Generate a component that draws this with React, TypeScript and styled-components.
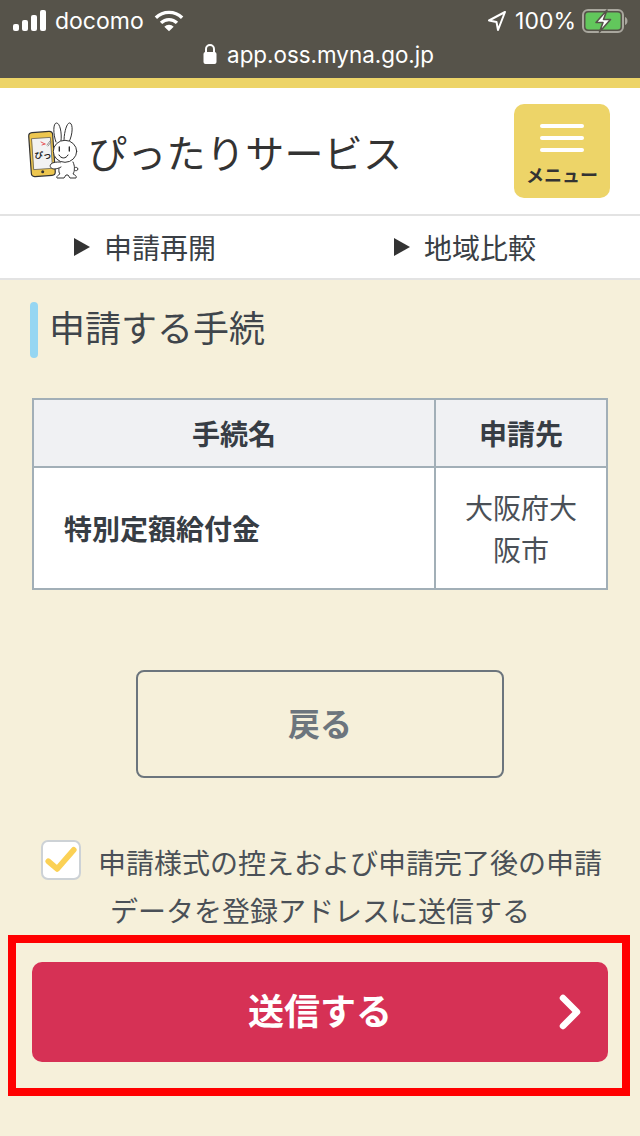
import React from 'react';
import styled, { createGlobalStyle } from 'styled-components';

const GlobalStyle = createGlobalStyle`
  html, body {
    margin: 0;
    padding: 0;
  }
  body {
    background: #f6f0da;
    font-family: "Noto Sans CJK JP", "Noto Sans", sans-serif;
  }
`;

const Page = styled.div`
  position: relative;
  width: 640px;
  height: 1136px;
  overflow: hidden;
  display: flex;
  flex-direction: column;
  background: #f6f0da;
`;

const StatusArea = styled.div`
  height: 78px;
  box-sizing: border-box;
  background: #56534a;
  color: #fff;
  display: flex;
  flex-direction: column;
`;

const StatusRow = styled.div`
  height: 42px;
  display: flex;
  align-items: center;
  justify-content: space-between;
  padding: 0 12px 0 11px;
  font-family: Inter, "Liberation Sans", sans-serif;
  font-size: 23px;
`;

const StatusGroup = styled.div`
  display: flex;
  align-items: center;
  gap: 8px;
`;

const UrlRow = styled.div`
  display: flex;
  align-items: center;
  justify-content: center;
  gap: 10px;
  height: 24px;
  padding-right: 3px;
  font-family: Inter, "Liberation Sans", sans-serif;
  font-size: 22.400px;
`;

const TopBand = styled.div`
  height: 10px;
  background: #edd468;
`;

const Header = styled.header`
  height: 126px;
  box-sizing: border-box;
  background: #fff;
  display: flex;
  align-items: center;
  justify-content: space-between;
  padding: 0 30px 0 27px;
`;

const Brand = styled.div`
  display: flex;
  align-items: center;
  gap: 9px;
`;

const BrandName = styled.div`
  font-size: 39px;
  letter-spacing: 0.3px;
  color: #333;
  line-height: 1;
`;

const MenuButton = styled.button`
  width: 96px;
  height: 94px;
  border: none;
  border-radius: 10px;
  background: #edd468;
  display: flex;
  flex-direction: column;
  align-items: center;
  padding: 20px 0 0;
  font-family: inherit;
`;

const MenuBar = styled.span`
  width: 44px;
  height: 4px;
  border-radius: 2px;
  background: #fff;
  margin-bottom: 8px;
`;

const MenuLabel = styled.span`
  margin-top: 3px;
  font-size: 18px;
  font-weight: 700;
  line-height: 22px;
  color: #333;
`;

const SubNav = styled.nav`
  height: 66px;
  box-sizing: border-box;
  background: #fff;
  border-top: 2px solid #e3e3e3;
  border-bottom: 2px solid #e3e3e3;
  display: grid;
  grid-template-columns: 320px 1fr;
`;

const SubNavLink = styled.a`
  display: flex;
  align-items: center;
  padding-left: 74px;
  gap: 14px;
  font-size: 28px;
  line-height: 60px;
  color: #3a3f45;
`;

const Arrow = styled.span`
  width: 0;
  height: 0;
  border-style: solid;
  border-width: 9px 0 9px 16px;
  border-color: transparent transparent transparent #333;
`;

const Content = styled.main`
  padding: 22px 32px 0;
  display: flex;
  flex-direction: column;
`;

const SectionTitle = styled.h2`
  margin: 0 0 40px -2px;
  height: 56px;
  display: flex;
  align-items: flex-start;
  gap: 11px;
  font-size: 36px;
  font-weight: 400;
  line-height: 48px;
  color: #3f454b;

  &::before {
    content: '';
    width: 8px;
    height: 56px;
    border-radius: 4px;
    background: #96d6f2;
  }
`;

const Table = styled.table`
  width: 576px;
  border-collapse: collapse;
  background: #fff;
  table-layout: fixed;
  color: #373d44;
  font-size: 28px;
`;

const NameColumn = styled.col`
  width: 402px;
`;

const HeadCell = styled.th`
  height: 66px;
  padding: 0;
  border: 2px solid #a2afb7;
  background: #f0f1f3;
  font-weight: 700;
`;

const NameCell = styled.td`
  height: 120px;
  padding: 0 0 0 30px;
  border: 2px solid #a2afb7;
  font-weight: 700;
`;

const PlaceCell = styled.td`
  padding: 0 20px;
  border: 2px solid #a2afb7;
  text-align: center;
  line-height: 42px;
  color: #4a5057;
`;

const BackButton = styled.button`
  align-self: center;
  width: 368px;
  height: 108px;
  margin-top: 80px;
  padding: 0 0 5px;
  border: 2px solid #6c757d;
  border-radius: 8px;
  background: transparent;
  color: #6c757d;
  font-family: inherit;
  font-size: 32px;
  font-weight: 700;
`;

const ConsentRow = styled.label`
  display: block;
  margin-top: 60px;
  text-align: center;
  font-size: 28px;
  line-height: 48px;
  color: #4a5057;
`;

const CheckBox = styled.span`
  display: inline-flex;
  align-items: center;
  justify-content: center;
  width: 40px;
  height: 40px;
  margin: -7px 17px 5px 3px;
  vertical-align: middle;
  box-sizing: border-box;
  border: 2px solid #cdd2d6;
  border-radius: 7px;
  background: #fff;
`;

const SendButton = styled.button`
  position: relative;
  width: 576px;
  height: 100px;
  margin-top: 28px;
  padding: 0 0 6px;
  border: none;
  border-radius: 10px;
  background: #d63155;
  color: #fff;
  font-family: inherit;
  font-size: 36px;
  font-weight: 700;
`;

const SendChevron = styled.svg`
  position: absolute;
  right: 26px;
  top: 32px;
`;

// the red mark drawn over the screenshot
const Highlight = styled.div`
  position: absolute;
  left: 8px;
  top: 935px;
  width: 622px;
  height: 161px;
  box-sizing: border-box;
  border: 8px solid #ff0000;
  pointer-events: none;
`;

const WifiSvg = styled.svg`
  margin-left: 2px;
`;

const BatterySvg = styled.svg`
  margin-left: -2px;
`;

const SignalIcon = () => (
  <svg width="36" height="24" viewBox="0 0 36 24" fill="#fff">
    <rect x="2" y="15" width="6" height="7" rx="2" />
    <rect x="11" y="11" width="6" height="11" rx="2" />
    <rect x="20" y="6" width="6" height="16" rx="2" />
    <rect x="29" y="1" width="6" height="21" rx="2" />
  </svg>
);

const WifiIcon = () => (
  <WifiSvg width="30" height="24" viewBox="0 0 32 24" fill="none" stroke="#fff" strokeWidth="3.600">
    <path d="M2 8.500a20 20 0 0 1 28 0" />
    <path d="M7.500 14a12 12 0 0 1 17 0" />
    <path d="M16 23l-5-5a7 7 0 0 1 10 0z" fill="#fff" stroke="none" />
  </WifiSvg>
);

const LocationIcon = () => (
  <svg width="20" height="22" viewBox="0 0 20 22" fill="none" stroke="#fff" strokeWidth="2" strokeLinejoin="round">
    <path d="M18 2L2 10.500l7.500 1.500L11 20z" />
  </svg>
);

const BatteryIcon = () => (
  <BatterySvg width="46" height="28" viewBox="0 0 46 28">
    <rect x="1" y="3" width="40" height="22" rx="5" fill="none" stroke="#a9a79e" strokeWidth="2" />
    <rect x="3.500" y="5.500" width="35" height="17" rx="3" fill="#62c75c" />
    <path d="M43 10c1.500.5 2.500 2 2.500 4s-1 3.500-2.500 4z" fill="#a9a79e" />
    <path d="M25 3L14 15.500h7L17.500 25l11-12.500h-7z" fill="#fff" stroke="#56534a" strokeWidth="1.600" strokeLinejoin="round" />
  </BatterySvg>
);

const LockIcon = () => (
  <svg width="14" height="22" viewBox="0 0 14 22">
    <path d="M3 10V6a4 4 0 0 1 8 0v4" fill="none" stroke="#fff" strokeWidth="2" />
    <rect x="0.500" y="9" width="13" height="12" rx="2" fill="#fff" />
  </svg>
);

const MascotLogo = () => (
  <svg width="52" height="58" viewBox="0 0 52 58" strokeLinecap="round" strokeLinejoin="round">
    <rect x="3" y="10" width="24" height="44" rx="3.500" fill="#edc64f" stroke="#333" strokeWidth="1.200" transform="rotate(-4 15 32)" />
    <rect x="6" y="16" width="18.500" height="31" fill="#f2f2f2" stroke="#555" strokeWidth="0.700" transform="rotate(-4 15 32)" />
    <circle cx="15.700" cy="49.800" r="1.500" fill="#333" />
    <path d="M14 20l4 2M15 23l3-1" stroke="#e5484d" strokeWidth="0.900" fill="none" />
    <path d="M23 19l-3 4M24 20l-3 4" stroke="#777" strokeWidth="0.800" fill="none" />
    <text x="7.500" y="36" fontSize="8.500" fontWeight="700" fill="#222" fontFamily="'Noto Sans CJK JP', sans-serif">ぴっ</text>
    <path d="M29 20C26 12 26 1 29.500 1s5.500 10 4.500 18" fill="#fff" stroke="#333" strokeWidth="1" />
    <path d="M37 19C37 10 40 0 43 1s3 11-1 19" fill="#fff" stroke="#333" strokeWidth="1" />
    <path d="M33 40c-1 5-2 10 0 12-2 1-4 3-3 4h7l2-3h2l2 3h6c1-2-1-3-3-4 2-3 2-8 0-12" fill="#fff" stroke="#333" strokeWidth="1" />
    <circle cx="49" cy="47" r="1.800" fill="#fff" stroke="#333" strokeWidth="0.800" />
    <ellipse cx="38" cy="29.300" rx="11.700" ry="11" fill="#fff" stroke="#333" strokeWidth="1" />
    <path d="M32.300 25v4M42.300 25v4" stroke="#222" strokeWidth="1.300" fill="none" />
    <path d="M32 33c2 4 7 4 9 0" stroke="#222" strokeWidth="1" fill="#fff" />
    <path d="M33 40c-3 0-7 0-9 2s0 5 3 5 5-1 7-2" fill="#fff" stroke="#333" strokeWidth="1" />
  </svg>
);

const App: React.FC = () => {
  return (
    <Page>
      <GlobalStyle />
      <StatusArea>
        <StatusRow>
          <StatusGroup>
            <SignalIcon />
            <span>docomo</span>
            <WifiIcon />
          </StatusGroup>
          <StatusGroup>
            <LocationIcon />
            <span>100%</span>
            <BatteryIcon />
          </StatusGroup>
        </StatusRow>
        <UrlRow>
          <LockIcon />
          <span>app.oss.myna.go.jp</span>
        </UrlRow>
      </StatusArea>
      <TopBand />
      <Header>
        <Brand>
          <MascotLogo />
          <BrandName>ぴったりサービス</BrandName>
        </Brand>
        <MenuButton>
          <MenuBar />
          <MenuBar />
          <MenuBar />
          <MenuLabel>メニュー</MenuLabel>
        </MenuButton>
      </Header>
      <SubNav>
        <SubNavLink>
          <Arrow />
          申請再開
        </SubNavLink>
        <SubNavLink>
          <Arrow />
          地域比較
        </SubNavLink>
      </SubNav>
      <Content>
        <SectionTitle>申請する手続</SectionTitle>
        <Table>
          <colgroup>
            <NameColumn />
            <col />
          </colgroup>
          <thead>
            <tr>
              <HeadCell>手続名</HeadCell>
              <HeadCell>申請先</HeadCell>
            </tr>
          </thead>
          <tbody>
            <tr>
              <NameCell>特別定額給付金</NameCell>
              <PlaceCell>大阪府大阪市</PlaceCell>
            </tr>
          </tbody>
        </Table>
        <BackButton>戻る</BackButton>
        <ConsentRow>
          <CheckBox>
            <svg width="34" height="28" viewBox="0 0 26 22" fill="none" stroke="#fbd155" strokeWidth="4.500" strokeLinecap="round" strokeLinejoin="round">
              <path d="M3 12l7 6L23 3" />
            </svg>
          </CheckBox>
          申請様式の控えおよび申請完了後の申請データを登録アドレスに送信する
        </ConsentRow>
        <SendButton>
          送信する
          <SendChevron width="24" height="36" viewBox="0 0 24 36" fill="none" stroke="#fff" strokeWidth="6.500" strokeLinecap="round" strokeLinejoin="round">
            <path d="M5 4l14 14L5 32" />
          </SendChevron>
        </SendButton>
      </Content>
      <Highlight />
    </Page>
  );
};

export default App;
